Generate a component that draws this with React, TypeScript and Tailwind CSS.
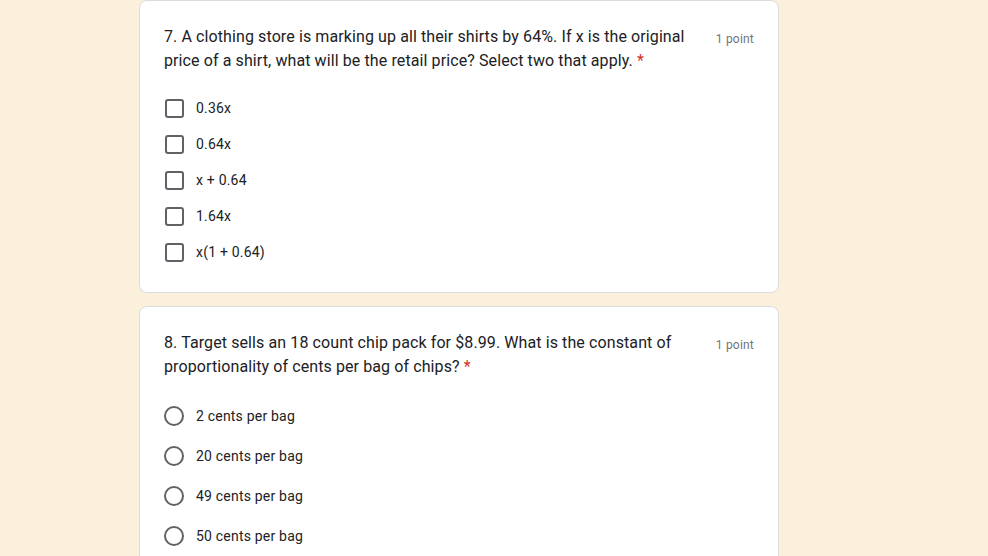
import React from "react";

const checkOpts = ["0.36x", "0.64x", "x + 0.64", "1.64x", "x(1 + 0.64)"];
const radioOpts = ["2 cents per bag", "20 cents per bag", "49 cents per bag", "50 cents per bag"];

function Title({ lines }: { lines: string[] }) {
  return (
    <div className="flex items-start justify-between">
      <div
        className="text-[16px] leading-[24px] text-[#202124] tracking-[0.1px]"
        style={{ fontFamily: "Roboto, 'Noto Sans', sans-serif" }}
      >
        {lines.map((l, i) => (
          <React.Fragment key={i}>
            {l}
            {i === lines.length - 1 ? (
              <span className="text-[#d93025]"> *</span>
            ) : (
              <br />
            )}
          </React.Fragment>
        ))}
      </div>
      <div className="mt-[2px] text-[12px] leading-[24px] text-[#70757a] tracking-[0.2px] whitespace-nowrap pl-6">1 point</div>
    </div>
  );
}

export default function App() {
  return (
    <div
      className="min-h-[556px] w-full bg-[#fbf0dc] overflow-hidden"
      style={{ fontFamily: "Roboto, 'Noto Sans', sans-serif" }}
    >
      <div className="ml-[139px] w-[640px] flex flex-col gap-[13px]">
        <div className="bg-white border border-[#dadce0] rounded-lg px-6 pt-6 pb-[22px]">
          <Title
            lines={[
              "7. A clothing store is marking up all their shirts by 64%. If x is the original",
              "price of a shirt, what will be the retail price? Select two that apply.",
            ]}
          />
          <div className="mt-[17px] flex flex-col">
            {checkOpts.map((o) => (
              <div key={o} className="h-9 flex items-center gap-3">
                <div className="w-5 h-5 flex items-center justify-center">
                  <div className="w-[19px] h-[19px] border-2 border-[#5f6368] rounded-[3px]" />
                </div>
                <span className="text-[14px] leading-5 text-[#202124] tracking-[0.2px]">{o}</span>
              </div>
            ))}
          </div>
        </div>
        <div className="bg-white border border-[#dadce0] rounded-lg px-6 pt-6 pb-6">
          <Title
            lines={[
              "8. Target sells an 18 count chip pack for $8.99. What is the constant of",
              "proportionality of cents per bag of chips?",
            ]}
          />
          <div className="mt-[17px] flex flex-col">
            {radioOpts.map((o) => (
              <div key={o} className="h-10 flex items-center gap-3">
                <div className="w-5 h-5 border-2 border-[#5f6368] rounded-full" />
                <span className="text-[14px] leading-5 text-[#202124] tracking-[0.2px]">{o}</span>
              </div>
            ))}
          </div>
        </div>
      </div>
    </div>
  );
}
